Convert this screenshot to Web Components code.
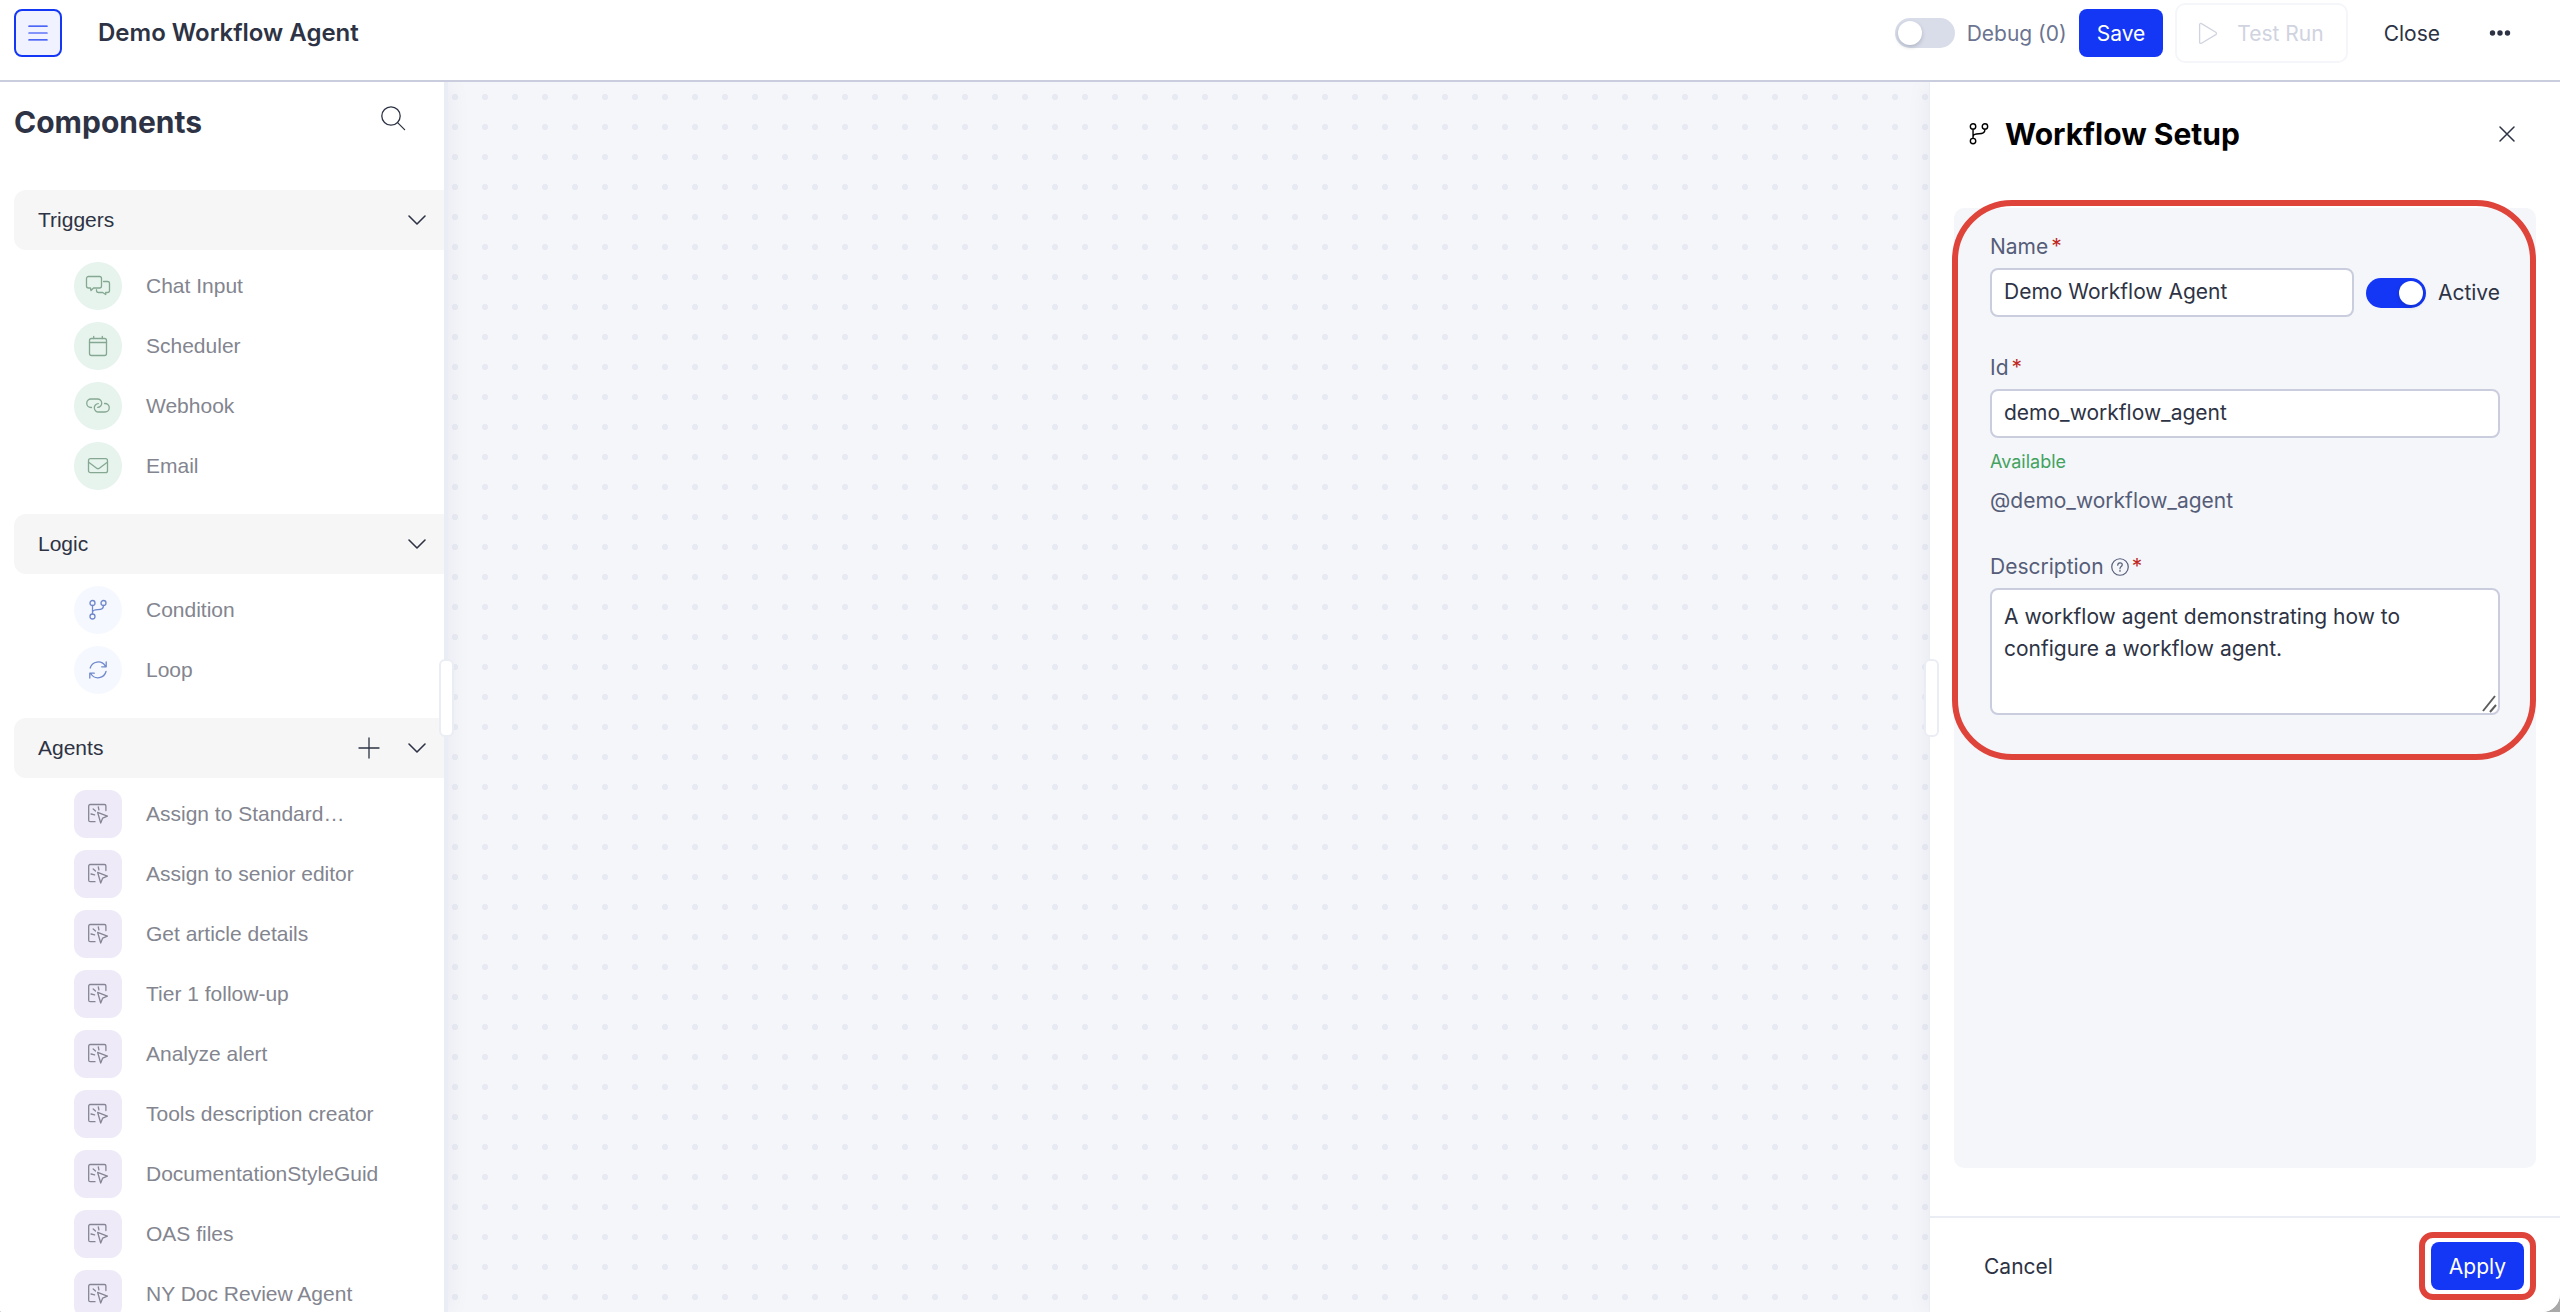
<!DOCTYPE html>
<html lang="en">
<head>
<meta charset="utf-8">
<title>Demo Workflow Agent</title>
<style>
  body {
    margin: 0;
    background: #a9a9a9;
    color: #2d3344;
    font-family: Inter, "Liberation Sans", sans-serif;
    font-size: 21px;
    --primary: #1437f5;
    --line: #c9cddd;
    --soft-line: #ebedf5;
    --surface: #f4f6fa;
    --muted: #565d78;
    --mark: #df443b;
  }
</style>
</head>
<body>
<workflow-editor></workflow-editor>

<script>
const ICONS = {
  menu: '<path d="M2 4.500h20M2 12h20M2 19.500h20"/>',
  search: '<circle cx="10" cy="10" r="9.2"/><path d="M16.6 16.6l7 7"/>',
  chevron: '<path d="M4 8l8 8 8-8"/>',
  plus: '<path d="M12 2v20M2 12h20"/>',
  close: '<path d="M5 5l14 14M19 5L5 19"/>',
  play: '<path d="M2.600 3.600v17.600c0 1.100 1 1.600 1.900 1l14.300-8.600c.9-.6.9-1.700 0-2.300L4.500 2.600c-.9-.6-1.900-.1-1.900 1z"/>',
  dots: '<g fill="currentColor" stroke="none"><circle cx="4.500" cy="12" r="2.700"/><circle cx="12" cy="12" r="2.700"/><circle cx="19.500" cy="12" r="2.700"/></g>',
  help: '<circle cx="12" cy="12" r="11"/><path d="M9 9.500c0-4 6-4 6-.4 0 2.400-3 2.200-3 4.900M12 16.200v1.600"/>',
  chat: '<path d="M2.500 2.500h11a2 2 0 0 1 2 2v7.500a2 2 0 0 1-2 2H7.500l-2.500 2.500L4.500 14h-2a2 2 0 0 1-2-2V4.500a2 2 0 0 1 2-2z"/><path d="M17.500 7.500h4a2 2 0 0 1 2 2v7a2 2 0 0 1-2 2h-1.800v2l-3-2h-4.200a2 2 0 0 1-2-2v-.8"/>',
  calendar: '<rect x="3.500" y="4.500" width="17" height="17" rx="2"/><path d="M3.500 8.500h17M7.700 2.300v2.200M16.300 2.300v2.200"/>',
  link: '<path d="M5.500 13.500H5a4.200 4.200 0 0 1 0-8.500h6.300a4.200 4.200 0 0 1 .4 8.400"/><path d="M18.500 9.500h.5a4.200 4.200 0 0 1 0 8.500h-6.300a4.200 4.200 0 0 1-.4-8.400"/>',
  mail: '<rect x="2.500" y="4.700" width="19" height="14" rx="2"/><path d="M2.700 8.200l8.300 6.200q1 .7 2 0l8.300-6.200"/>',
  branch: '<circle cx="6.500" cy="5" r="2.500"/><circle cx="17.500" cy="5" r="2.500"/><circle cx="6.500" cy="18.500" r="2.500"/><path d="M6.500 7.500V16M17.500 7.500c0 3.500-2.500 4.200-5.500 4.200-3.500 0-5.500.5-5.500 3"/>',
  loop: '<path d="M4.200 10a8.300 8.300 0 0 1 15-2.200M20.200 4v4.800h-4.500M20 13.500a8.300 8.300 0 0 1-15 2.500M3.800 20v-4.800h4.500"/>',
  agent: '<path d="M9 19.700H4.200a1.500 1.500 0 0 1-1.500-1.500V4a1.500 1.500 0 0 1 1.500-1.500h14.200A1.500 1.500 0 0 1 19.900 4v4.500"/><path d="M11.600 10.300l9.800 3.800-4.700 2-2 4.900z"/><path d="M12.300 5l.6 2.800M7.200 7l2.300 2M5 12l3.600.9"/>'
};

// <app-icon name="" size=""> : stroked icon on a 24 unit grid
class AppIcon extends HTMLElement {
  constructor() {
    super();
    this.attachShadow({ mode: 'open' });
  }

  connectedCallback() {
    const size = this.getAttribute('size') || 24;
    const stroke = this.getAttribute('stroke') || 1.3;
    this.shadowRoot.innerHTML = `
      <style>
        :host { display: inline-flex; flex: none; }
        svg { display: block; overflow: visible; }
      </style>
      <svg width="${size}" height="${size}" viewBox="0 0 24 24" fill="none" stroke="currentColor"
        stroke-width="${stroke}" stroke-linecap="round" stroke-linejoin="round" aria-hidden="true">
        ${ICONS[this.getAttribute('name')]}
      </svg>
    `;
  }
}

// <app-button variant="primary | outline | text | menu | icon">
class AppButton extends HTMLElement {
  constructor() {
    super();
    this.attachShadow({ mode: 'open' });
  }

  connectedCallback() {
    const label = this.getAttribute('label');
    this.shadowRoot.innerHTML = `
      <style>
        :host { display: inline-flex; flex: none; }
        button {
          display: flex;
          align-items: center;
          justify-content: center;
          gap: 16px;
          box-sizing: border-box;
          height: 48px;
          padding: 0 18px;
          border: 0;
          border-radius: 8px;
          background: none;
          color: inherit;
          font: inherit;
          cursor: pointer;
        }
        :host([variant="primary"]) button { background: var(--primary); color: #fff; }
        :host([variant="outline"]) button {
          height: 60px;
          padding: 0 22px 0 20px;
          border: 2px solid var(--surface);
          border-radius: 10px;
          color: #d0d3e0;
        }
        :host([variant="text"]) button { padding: 0 24px; }
        :host([variant="menu"]) button {
          width: 48px;
          padding: 0;
          border: 2px solid var(--primary);
          background: #f0f2ff;
          color: var(--primary);
        }
        :host([variant="icon"]) button { height: 28px; padding: 0; }
      </style>
      <button type="button" ${label ? `aria-label="${label}"` : ''} ${this.hasAttribute('disabled') ? 'disabled' : ''}>
        <slot></slot>
      </button>
    `;
  }
}

class ToggleSwitch extends HTMLElement {
  constructor() {
    super();
    this.attachShadow({ mode: 'open' });
  }

  connectedCallback() {
    this.shadowRoot.innerHTML = `
      <style>
        :host { display: inline-flex; flex: none; }
        label { display: flex; align-items: center; gap: 12px; white-space: nowrap; }
        input {
          appearance: none;
          box-sizing: border-box;
          width: 60px;
          height: 30px;
          margin: 0;
          padding: 3px;
          border-radius: 15px;
          background: #d9dde9;
        }
        input::before {
          content: "";
          display: block;
          width: 24px;
          height: 24px;
          border-radius: 50%;
          background: #fff;
          box-shadow: 0 2px 4px rgba(0, 20, 60, 0.2);
        }
        input:checked { background: var(--primary); }
        input:checked::before { margin-left: auto; }
      </style>
      <label><input type="checkbox" role="switch" ${this.hasAttribute('checked') ? 'checked' : ''}><span><slot></slot></span></label>
    `;
  }
}

class TopBar extends HTMLElement {
  constructor() {
    super();
    this.attachShadow({ mode: 'open' });
    this.shadowRoot.innerHTML = `
      <style>
        :host {
          display: flex;
          align-items: center;
          justify-content: space-between;
          padding: 3px 36px 17px 14px;
          border-bottom: 2px solid var(--line);
          background: #fff;
        }
        .start { display: flex; align-items: center; gap: 36px; }
        .end { display: flex; align-items: center; gap: 12px; }
        h1 { margin: 0; font-size: 24px; line-height: 32px; font-weight: 600; }
        .debug { color: #6b7490; }
        .more { display: flex; padding: 0 12px; }
      </style>
      <div class="start">
        <app-button variant="menu" label="Menu"><app-icon name="menu" size="22"></app-icon></app-button>
        <h1>Demo Workflow Agent</h1>
      </div>
      <div class="end">
        <toggle-switch class="debug">Debug (0)</toggle-switch>
        <app-button variant="primary">Save</app-button>
        <app-button variant="outline" disabled><app-icon name="play"></app-icon>Test Run</app-button>
        <app-button variant="text">Close</app-button>
        <div class="more"><app-button variant="icon" label="More"><app-icon name="dots"></app-icon></app-button></div>
      </div>
    `;
  }
}

class ComponentItem extends HTMLElement {
  constructor() {
    super();
    this.attachShadow({ mode: 'open' });
  }

  connectedCallback() {
    this.shadowRoot.innerHTML = `
      <style>
        :host {
          display: flex;
          align-items: center;
          gap: 24px;
          color: #83858f;
        }
        .badge {
          display: flex;
          flex: none;
          align-items: center;
          justify-content: center;
          width: 48px;
          height: 48px;
          border-radius: 50%;
        }
        :host([kind="trigger"]) .badge { background: #e6f4ed; color: #86a892; }
        :host([kind="logic"]) .badge { background: #f6f8ff; color: #7088cc; }
        :host([kind="agent"]) .badge { border-radius: 12px; background: #eeeaf8; color: #858596; }
        .name { line-height: 28px; white-space: nowrap; }
      </style>
      <span class="badge"><app-icon name="${this.getAttribute('icon')}"></app-icon></span>
      <span class="name"><slot></slot></span>
    `;
  }
}

class ComponentGroup extends HTMLElement {
  constructor() {
    super();
    this.attachShadow({ mode: 'open' });
  }

  connectedCallback() {
    const name = this.getAttribute('name');
    this.shadowRoot.innerHTML = `
      <style>
        :host { display: block; font-family: "Liberation Sans", Arial, sans-serif; }
        .bar {
          display: flex;
          align-items: center;
          gap: 24px;
          height: 60px;
          padding: 0 15px 0 24px;
          border-radius: 12px 0 0 12px;
          background: #f6f6f6;
        }
        h3 { flex: 1; margin: 0; font-size: 21px; line-height: 28px; font-weight: 400; }
        .items { display: flex; flex-direction: column; gap: 12px; padding: 12px 0 0 60px; }
      </style>
      <div class="bar">
        <h3>${name}</h3>
        ${this.hasAttribute('addable') ? '<app-button variant="icon" label="Add"><app-icon name="plus"></app-icon></app-button>' : ''}
        <app-button variant="icon" label="Collapse ${name}"><app-icon name="chevron" stroke="1.6"></app-icon></app-button>
      </div>
      <div class="items"><slot></slot></div>
    `;
  }
}

const AGENTS = [
  'Assign to Standard…', 'Assign to senior editor', 'Get article details', 'Tier 1 follow-up', 'Analyze alert',
  'Tools description creator', 'DocumentationStyleGuid', 'OAS files', 'NY Doc Review Agent'
];

class ComponentSidebar extends HTMLElement {
  constructor() {
    super();
    this.attachShadow({ mode: 'open' });
    this.shadowRoot.innerHTML = `
      <style>
        :host {
          display: flex;
          flex-direction: column;
          position: relative;
          z-index: 1;
          min-height: 0;
          padding-left: 14px;
          border-right: 4px solid var(--soft-line);
          background: #fff;
          box-shadow: 0 0 24px rgba(20, 30, 60, 0.06);
        }
        header {
          display: flex;
          align-items: flex-start;
          justify-content: space-between;
          padding: 22px 39px 50px 0;
        }
        h2 { margin: 0; font-size: 30px; line-height: 36px; font-weight: 700; }
        .groups {
          display: flex;
          flex: 1;
          flex-direction: column;
          gap: 24px;
          min-height: 0;
          overflow: hidden;
        }
        component-group { flex: none; }
      </style>
      <header>
        <h2>Components</h2>
        <app-button variant="icon" label="Search"><app-icon name="search"></app-icon></app-button>
      </header>
      <div class="groups">
        <component-group name="Triggers">
          <component-item kind="trigger" icon="chat">Chat Input</component-item>
          <component-item kind="trigger" icon="calendar">Scheduler</component-item>
          <component-item kind="trigger" icon="link">Webhook</component-item>
          <component-item kind="trigger" icon="mail">Email</component-item>
        </component-group>
        <component-group name="Logic">
          <component-item kind="logic" icon="branch">Condition</component-item>
          <component-item kind="logic" icon="loop">Loop</component-item>
        </component-group>
        <component-group name="Agents" addable>
          ${AGENTS.map(a => `<component-item kind="agent" icon="agent">${a}</component-item>`).join('')}
        </component-group>
      </div>
      <drag-handle></drag-handle>
    `;
  }
}

// Resize grip that sits over the edge of a side panel
class DragHandle extends HTMLElement {
  constructor() {
    super();
    this.attachShadow({ mode: 'open' });
    this.shadowRoot.innerHTML = `
      <style>
        :host {
          position: absolute;
          top: 50%;
          right: -10px;
          box-sizing: border-box;
          width: 15px;
          height: 78px;
          margin-top: -38px;
          border: 2px solid var(--soft-line);
          border-radius: 6px;
          background: #fff;
        }
        :host([side="left"]) { right: auto; left: -6px; }
      </style>
    `;
  }
}

class FlowCanvas extends HTMLElement {
  constructor() {
    super();
    this.attachShadow({ mode: 'open' });
    this.shadowRoot.innerHTML = `
      <style>
        :host {
          display: block;
          background: radial-gradient(circle, #e8eaf3 2.8px, transparent 3.3px) -8px 0 / 30px 30px var(--surface);
        }
      </style>
    `;
  }
}

// Labelled text field, single line or multiline
class FormField extends HTMLElement {
  constructor() {
    super();
    this.attachShadow({ mode: 'open' });
  }

  connectedCallback() {
    const value = this.getAttribute('value');
    const control = this.hasAttribute('multiline')
      ? `<div class="area"><textarea id="control" required>${value}</textarea>
          <svg width="16" height="18" viewBox="0 0 16 18" aria-hidden="true"><path d="M2 16L14 1M9 17l6-7" stroke="#5d5d5d" stroke-width="2"/></svg></div>`
      : `<input id="control" type="text" value="${value}" required>`;
    this.shadowRoot.innerHTML = `
      <style>
        :host { display: flex; flex-direction: column; gap: 8px; }
        .label { display: flex; align-items: center; gap: 3px; line-height: 26px; color: var(--muted); }
        .label app-icon { margin: 0 0 0 4px; }
        .required { color: #c0281f; }
        input, textarea {
          display: block;
          box-sizing: border-box;
          width: 100%;
          margin: 0;
          border: 2px solid var(--line);
          border-radius: 8px;
          background: #fff;
          color: inherit;
          font: inherit;
          outline: none;
        }
        input { height: 49px; padding: 0 12px 2px; }
        textarea { height: 127px; padding: 11px 12px; line-height: 32px; resize: none; }
        .area { position: relative; }
        .area svg { position: absolute; right: 3px; bottom: 2px; }
      </style>
      <div class="label">
        <label for="control">${this.getAttribute('label')}</label>
        ${this.hasAttribute('help') ? '<app-icon name="help" size="18" stroke="1.600"></app-icon>' : ''}
        <span class="required">*</span>
      </div>
      ${control}
    `;
  }
}

// Red outline around whatever is slotted in
class CalloutRing extends HTMLElement {
  constructor() {
    super();
    this.attachShadow({ mode: 'open' });
    this.shadowRoot.innerHTML = `
      <style>
        :host { display: block; position: relative; }
        .ring {
          position: absolute;
          inset: -8px 0 0 -2px;
          border: 6px solid var(--mark);
          border-radius: 60px;
          pointer-events: none;
        }
        :host([small]) .ring { inset: -10px -12px; border-radius: 14px; }
      </style>
      <slot></slot>
      <div class="ring"></div>
    `;
  }
}

class SetupPanel extends HTMLElement {
  constructor() {
    super();
    this.attachShadow({ mode: 'open' });
    this.shadowRoot.innerHTML = `
      <style>
        :host {
          display: flex;
          flex-direction: column;
          position: relative;
          z-index: 1;
          border-left: 1px solid var(--soft-line);
          background: #fff;
          box-shadow: 0 0 24px rgba(20, 30, 60, 0.06);
        }
        header {
          display: flex;
          align-items: center;
          gap: 13px;
          padding: 34px 41px 56px 36px;
          color: #000;
        }
        h2 { flex: 1; margin: 0; font-size: 30px; line-height: 36px; font-weight: 700; }
        .close { color: #2d3344; }
        .body { flex: 1; margin: 0 24px 48px; border-radius: 10px; background: var(--surface); }
        form { display: flex; flex-direction: column; gap: 38px; padding: 26px 36px 45px; }
        .name-row { display: flex; align-items: flex-end; gap: 12px; }
        .name-row form-field { flex: 1; }
        .name-row toggle-switch { height: 49px; align-items: center; }
        .id p { margin: 0; }
        .id .status { margin-top: 12px; font-size: 18px; line-height: 24px; color: #43a25f; }
        .id .handle { margin: 14px 0 2px; line-height: 26px; color: var(--muted); }
        footer {
          display: flex;
          align-items: center;
          justify-content: space-between;
          padding: 24px 36px 22px 30px;
          border-top: 2px solid var(--soft-line);
        }
      </style>
      <header>
        <app-icon name="branch" size="26"></app-icon>
        <h2>Workflow Setup</h2>
        <app-button class="close" variant="icon" label="Close panel"><app-icon name="close" stroke="1.5"></app-icon></app-button>
      </header>
      <div class="body">
        <callout-ring>
          <form>
            <div class="name-row">
              <form-field label="Name" value="Demo Workflow Agent"></form-field>
              <toggle-switch checked>Active</toggle-switch>
            </div>
            <div class="id">
              <form-field label="Id" value="demo_workflow_agent"></form-field>
              <p class="status">Available</p>
              <p class="handle">@demo_workflow_agent</p>
            </div>
            <form-field label="Description" help multiline
              value="A workflow agent demonstrating how to configure a workflow agent."></form-field>
          </form>
        </callout-ring>
      </div>
      <footer>
        <app-button variant="text">Cancel</app-button>
        <callout-ring small><app-button variant="primary">Apply</app-button></callout-ring>
      </footer>
      <drag-handle side="left"></drag-handle>
    `;
  }
}

class WorkflowEditor extends HTMLElement {
  constructor() {
    super();
    this.attachShadow({ mode: 'open' });
    this.shadowRoot.innerHTML = `
      <style>
        :host {
          display: flex;
          flex-direction: column;
          height: 100vh;
          overflow: hidden;
          border-radius: 0 0 18px 2px;
          background: #fff;
        }
        main {
          display: grid;
          flex: 1;
          grid-template-columns: 448px 1fr 631px;
          grid-template-rows: minmax(0, 1fr);
          min-height: 0;
          overflow: hidden;
        }
      </style>
      <top-bar></top-bar>
      <main>
        <component-sidebar></component-sidebar>
        <flow-canvas></flow-canvas>
        <setup-panel></setup-panel>
      </main>
    `;
  }
}

customElements.define('app-icon', AppIcon);
customElements.define('app-button', AppButton);
customElements.define('toggle-switch', ToggleSwitch);
customElements.define('drag-handle', DragHandle);
customElements.define('callout-ring', CalloutRing);
customElements.define('form-field', FormField);
customElements.define('component-item', ComponentItem);
customElements.define('component-group', ComponentGroup);
customElements.define('component-sidebar', ComponentSidebar);
customElements.define('flow-canvas', FlowCanvas);
customElements.define('setup-panel', SetupPanel);
customElements.define('top-bar', TopBar);
customElements.define('workflow-editor', WorkflowEditor);
</script>
</body>
</html>
